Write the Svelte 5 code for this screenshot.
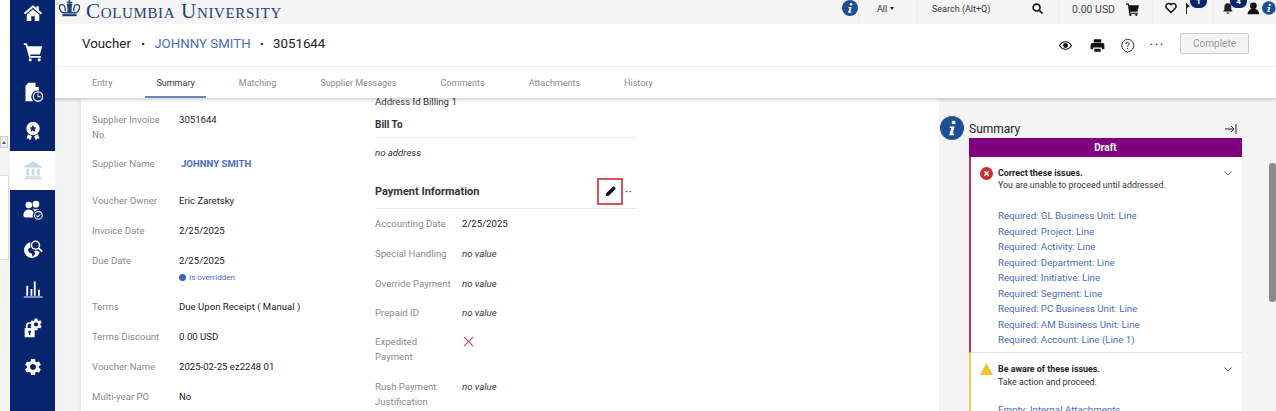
<script>
	const navIcons = ['home', 'cart', 'doc', 'award', 'bank', 'users', 'globe', 'chart', 'lock', 'gear'];
	const tabs = ['Entry', 'Summary', 'Matching', 'Supplier Messages', 'Comments', 'Attachments', 'History'];
	const issues = [
		'Required: GL Business Unit: Line',
		'Required: Project: Line',
		'Required: Activity: Line',
		'Required: Department: Line',
		'Required: Initiative: Line',
		'Required: Segment: Line',
		'Required: PC Business Unit: Line',
		'Required: AM Business Unit: Line',
		'Required: Account: Line (Line 1)'
	];
	const gearPath =
		'M19.14 12.94c.04-.3.06-.61.06-.94 0-.32-.02-.64-.07-.94l2.03-1.58a.49.49 0 0 0 .12-.61l-1.92-3.32a.488.488 0 0 0-.59-.22l-2.39.96c-.5-.38-1.03-.7-1.62-.94l-.36-2.54a.484.484 0 0 0-.48-.41h-3.84c-.24 0-.43.17-.47.41l-.36 2.54c-.59.24-1.13.57-1.62.94l-2.39-.96c-.22-.08-.47 0-.59.22L2.74 8.87c-.12.21-.08.47.12.61l2.03 1.58c-.05.3-.09.63-.09.94s.02.64.07.94l-2.03 1.58a.49.49 0 0 0-.12.61l1.92 3.32c.12.22.37.29.59.22l2.39-.96c.5.38 1.03.7 1.62.94l.36 2.54c.05.24.24.41.48.41h3.84c.24 0 .44-.17.47-.41l.36-2.54c.59-.24 1.13-.56 1.62-.94l2.39.96c.22.08.47 0 .59-.22l1.92-3.32c.12-.22.07-.47-.12-.61l-2.01-1.58zM12 15.6c-1.98 0-3.6-1.62-3.6-3.6s1.62-3.6 3.6-3.6 3.6 1.62 3.6 3.6-1.62 3.6-3.6 3.6z';
</script>

{#snippet infoDot(size)}
	<svg width={size} height={size} viewBox="0 0 24 24">
		<circle cx="12" cy="12" r="12" fill="#1f4f93" />
		<circle cx="13.6" cy="6.4" r="1.9" fill="#fff" />
		<path d="M10 10.4h4.6l-2 7.2h1.6l-.4 1.6H9.2l2-7.2H9.6z" fill="#fff" />
	</svg>
{/snippet}

{#snippet navIcon(name)}
	<svg width="20" height="20" viewBox="0 0 24 24" fill="currentColor">
		{#if name === 'home'}
			<path d="M12 2.5 1 12l1.6 1.8L12 5.7l9.4 8.1L23 12l-4-3.4V4h-3v2z" />
			<path d="M12 7.6 4.5 14v7.5h5.4v-5.6h4.2v5.6h5.4V14z" />
		{:else if name === 'cart'}
			<path d="M1 1.5h3.6l1.2 3.6h17.2l-2.6 10H8.6l.5 1.8h12.4v2H7.4L3.2 3.5H1z" />
			<circle cx="8.6" cy="21.4" r="1.9" />
			<circle cx="19.4" cy="21.4" r="1.9" />
		{:else if name === 'doc'}
			<path d="M6.5 1H15v5h4v4.5a7.5 7.5 0 0 0-6.9 12.5H3V4.5z" />
			<circle cx="18" cy="17.5" r="5.6" fill="none" stroke="currentColor" stroke-width="1.6" />
			<path d="M17.4 14h1.2v3.2h2.6v1.2h-3.8z" />
		{:else if name === 'award'}
			<path d="M12 1a8 8 0 1 0 0 16 8 8 0 0 0 0-16zm0 3.6 1.3 2.8 3 .4-2.2 2.1.6 3-2.7-1.5-2.7 1.5.6-3-2.2-2.1 3-.4z" fill-rule="evenodd" />
			<path d="m6 16 4.8 2.3-2.400 5.200L7 21l-2.800.2zM18 16l-4.800 2.300 2.400 5.200L17 21l2.800.2z" />
		{:else if name === 'bank'}
			<path d="M12 1.5 1.5 7.5V9h21V7.500z" />
			<path d="M4 10.500h3v8H4zM10.500 10.500h3v8h-3zM17 10.500h3v8h-3zM2.500 19.500h19v1.500h-19zM1.500 21.500h21V23h-21z" />
		{:else if name === 'users'}
			<circle cx="7" cy="6" r="4" />
			<circle cx="15.500" cy="5" r="4" />
			<path d="M0.500 19c0-5 2.500-7.500 6.500-7.500 2.800 0 4.700 1.200 5.700 3.500a7 7 0 0 0-.7 6H3a2.500 2.500 0 0 1-2.500-2z" />
			<path d="M11.500 9.800c1 .8 2.500 1.200 4 1.200 1.800 0 3.400.3 4.500 1.200a7 7 0 0 0-6.500 1.800c-.4-1.800-1-3-2-4.200z" />
			<circle cx="18.500" cy="18.500" r="4.600" fill="none" stroke="currentColor" stroke-width="1.300" />
			<path d="m16.200 18.600 1.700 1.700 2.900-3.200" fill="none" stroke="currentColor" stroke-width="1.300" />
		{:else if name === 'globe'}
			<path d="M9 4a9.500 9.500 0 1 0 11 11.500 8 8 0 0 1-2.600-1.500c-.6.300-1.600.1-2.100-.4l-1.800 1.500 1 3-3 3.400-.8-3.700-3.700-1.800-1-3.700 2.800-2.300L9 8.500A7 7 0 0 1 9 4z" />
			<circle cx="15" cy="7.500" r="4.800" fill="none" stroke="currentColor" stroke-width="1.800" />
			<path d="m18.500 11 4.500 4" stroke="currentColor" stroke-width="2.200" />
		{:else if name === 'chart'}
			<path d="M4 8h2.200v12H4zM9 12h2.200v8H9zM13 3h2.200v17H13zM18 13h2.200v7H18zM1 21h22.500v1.300H1z" />
		{:else if name === 'lock'}
			<g transform="translate(7 -1) scale(.72)"><path d={gearPath} /></g>
			<path d="M3.500 12V9.500a4.500 4.500 0 0 1 9 0V12h1.500v11H2V12zm2 0h5V9.500a2.500 2.500 0 0 0-5 0zM8 15a1.600 1.600 0 0 0-.8 3v2.500h1.600V18A1.600 1.600 0 0 0 8 15z" fill-rule="evenodd" />
		{:else}
			<path d={gearPath} />
		{/if}
	</svg>
{/snippet}

<div class="page">
	<div class="strip">
		<div class="strip-top"></div>
		<div class="strip-arrow"><span></span></div>
		<div class="strip-grey"></div>
		<div class="strip-panel"></div>
	</div>

	<nav class="sidebar">
		{#each navIcons as name}
			<div class="nav-item" class:active={name === 'bank'}>
				{@render navIcon(name)}
			</div>
		{/each}
	</nav>

	<div class="main">
		<header class="topbar">
			<div class="logo">
				<svg width="23" height="19" viewBox="0 0 24 20" fill="none" stroke="#1d4078" stroke-width="1.400">
					<path d="M12 1v12M9 3.500h6" />
					<path d="M2 6.500c3-1.500 5 0 5.500 3.500v3M22 6.500c-3-1.500-5 0-5.500 3.500v3" />
					<path d="M9.500 5c1 1.500 1 4 1 8h3c0-4 0-6.500 1-8" fill="#1d4078" />
					<path d="M2 6.500C.5 9 2 13 5 14.500h14C22 13 23.500 9 22 6.500" />
					<path d="M4.500 17h15" stroke-width="2.200" />
				</svg>
				<span>Columbia University</span>
			</div>
			<div class="top-info">{@render infoDot(16)}</div>
			<div class="seg seg-all">All <i class="caret"></i></div>
			<div class="seg seg-search">
				<span>Search (Alt+Q)</span>
				<svg width="11" height="11" viewBox="0 0 24 24" fill="none" stroke="#111" stroke-width="3.500"><circle cx="10" cy="10" r="7.500" /><path d="m16 16 7 7" /></svg>
			</div>
			<div class="seg seg-usd">
				<span>0.00 USD</span>
				<svg width="13" height="13" viewBox="0 0 24 24" fill="#111"><path d="M0 1h5l1 3h18l-3 12H7.500L8 18h14v2H6L3.500 3H0z" /><circle cx="8" cy="22" r="2" /><circle cx="19" cy="22" r="2" /></svg>
			</div>
			<div class="seg seg-fav">
				<svg width="12" height="12" viewBox="0 0 24 24" fill="none" stroke="#111" stroke-width="3"><path d="M12 21 3.500 12.500a5.500 5.500 0 0 1 0-8 5.500 5.500 0 0 1 8 0l.5.7.5-.7a5.500 5.500 0 0 1 8 0 5.500 5.500 0 0 1 0 8z" /></svg>
				<svg class="flag" width="4" height="11" viewBox="0 0 4 11" fill="#222"><path d="M0 0h1v11H0zM1 1l3 2-3 2z" /></svg>
				<b class="badge badge-fav">1</b>
			</div>
			<div class="seg seg-user">
				<svg width="12" height="13" viewBox="0 0 24 24" fill="#222"><path d="M12 1a7 7 0 0 1 7 7v6l3 4H2l3-4V8a7 7 0 0 1 7-7zM9 20h6a3 3 0 0 1-6 0z" /></svg>
				<b class="badge badge-bell">4</b>
				<svg class="user" width="13" height="13" viewBox="0 0 24 24" fill="#111"><circle cx="12" cy="7" r="6.500" /><path d="M1 23c0-6 4-9 7-10h8c3 1 7 4 7 10z" /></svg>
				{@render infoDot(14)}
			</div>
		</header>

		<div class="titlebar">
			<h1>Voucher <em class="first">•</em> <a href="#top">JOHNNY SMITH</a> <em>•</em> 3051644</h1>
			<div class="actions">
				<svg width="13" height="13" viewBox="0 0 24 24"><path d="M1 12C4 7 8 5 12 5s8 2 11 7c-3 5-7 7-11 7s-8-2-11-7z" fill="none" stroke="#111" stroke-width="2" /><circle cx="12" cy="12" r="4.500" fill="#111" /></svg>
				<svg width="15" height="15" viewBox="0 0 24 24" fill="#111"><path d="M6 2h12v5H6zM4 8h16a3 3 0 0 1 3 3v7h-4v-3H5v3H1v-7a3 3 0 0 1 3-3zM7 17h10v5H7z" /></svg>
				<svg class="help" width="15" height="15" viewBox="0 0 24 24" fill="none" stroke="#222" stroke-width="1.500"><path d="M12 2a10 10 0 0 1 2 19.800L12 23.500l-1-1.700A10 10 0 0 1 12 2z" /><path d="M9.500 9.500a2.500 2.500 0 1 1 3.500 2.300c-.7.400-1 .9-1 1.900M12 16v1.600" /></svg>
				<span class="dots">···</span>
				<button disabled>Complete</button>
			</div>
		</div>

		<div class="tabs">
			{#each tabs as tab}
				<span class="tab" class:current={tab === 'Summary'}>{tab}</span>
			{/each}
		</div>

		<div class="body">
			<section class="card">
				<div class="col col-left">
					<div class="row invoice"><label>Supplier Invoice No.</label><span>3051644</span></div>
					<div class="row wide-gap"><label>Supplier Name</label><a class="supplier" href="#top">JOHNNY SMITH</a></div>
					<div class="row"><label>Voucher Owner</label><span>Eric Zaretsky</span></div>
					<div class="row"><label>Invoice Date</label><span>2/25/2025</span></div>
					<div class="row due"><label>Due Date</label>
						<span>2/25/2025
							<small><i class="dot"></i>Is overridden</small>
						</span>
					</div>
					<div class="row"><label>Terms</label><span>Due Upon Receipt ( Manual )</span></div>
					<div class="row"><label>Terms Discount</label><span>0.00 USD</span></div>
					<div class="row"><label>Voucher Name</label><span>2025-02-25 ez2248 01</span></div>
					<div class="row"><label>Multi-year PO</label><span>No</span></div>
				</div>

				<div class="col col-right">
					<p class="address">Address Id Billing 1</p>
					<h3 class="bill">Bill To</h3>
					<p class="none">no address</p>
					<div class="pay-head">
						<h3>Payment Information</h3>
						<div class="edit">
							<svg width="11" height="11" viewBox="0 0 24 24" fill="#111"><path d="M16 2.500 21.500 8 8 21.500 1.500 22.500 2.500 16zM17.800 1l1.500-.5 4.200 4.200-.5 1.500-1.500 1.500L16.300 2.500z" /></svg>
						</div>
						<span class="more">··</span>
					</div>
					<div class="row"><label>Accounting Date</label><span>2/25/2025</span></div>
					<div class="row"><label>Special Handling</label><span class="nv">no value</span></div>
					<div class="row tight"><label>Override Payment</label><span class="nv">no value</span></div>
					<div class="row tight"><label>Prepaid ID</label><span class="nv">no value</span></div>
					<div class="row"><label>Expedited Payment</label>
						<svg class="cross" width="11" height="11" viewBox="0 0 12 12" fill="none" stroke="#c0485c" stroke-width="1.200"><path d="m1 1 10 10M11 1 1 11" /></svg>
					</div>
					<div class="row"><label>Rush Payment Justification</label><span class="nv">no value</span></div>
				</div>
			</section>

			<aside class="panel">
				<div class="panel-head">
					<div class="panel-info">{@render infoDot(24)}</div>
					<h2>Summary</h2>
					<svg width="12" height="10" viewBox="0 0 12 10" fill="none" stroke="#222" stroke-width="1"><path d="M0 5h9M6 2l3 3-3 3M11 0v10" /></svg>
				</div>
				<div class="draft">Draft</div>
				<div class="issues error">
					<div class="issue-head">
						<svg width="13" height="13" viewBox="0 0 24 24"><circle cx="12" cy="12" r="12" fill="#c9302c" /><path d="m8 8 8 8M16 8l-8 8" stroke="#fff" stroke-width="2.400" /></svg>
						<div class="issue-text"><b>Correct these issues.</b><br />You are unable to proceed until addressed.</div>
						<svg class="chev" width="8" height="5" viewBox="0 0 8 5" fill="none" stroke="#555"><path d="m.5.5 3.500 3.500L7.500.5" /></svg>
					</div>
					<ul>
						{#each issues as item}
							<li>{item}</li>
						{/each}
					</ul>
				</div>
				<div class="issues warn">
					<div class="issue-head">
						<svg width="13" height="12" viewBox="0 0 24 22" fill="#f2c230"><path d="M12 0 24 22H0z" /></svg>
						<div class="issue-text"><b>Be aware of these issues.</b><br />Take action and proceed.</div>
						<svg class="chev" width="8" height="5" viewBox="0 0 8 5" fill="none" stroke="#555"><path d="m.5.5 3.500 3.500L7.500.5" /></svg>
					</div>
					<ul><li>Empty: Internal Attachments</li></ul>
				</div>
			</aside>
			<div class="scrollbar"><span></span></div>
		</div>
	</div>
</div>

<style>
	:global(body) {
		margin: 0;
		overflow: hidden;
	}
	.page {
		display: flex;
		height: 411px;
		overflow: hidden;
		font-family: Roboto, 'Liberation Sans', sans-serif;
		font-size: 9.6px;
		color: #222;
		background: #f4f4f4;
	}

	/* sliver of the window behind */
	.strip {
		width: 10px;
		flex: none;
		display: flex;
		flex-direction: column;
		background: #f4f4f4;
	}
	.strip-top {
		height: 136px;
		background: #fff;
	}
	.strip-arrow {
		height: 12px;
		width: 8px;
		box-sizing: border-box;
		border: 1px solid #ccc;
		background: #eee;
		display: flex;
		align-items: center;
		justify-content: center;
	}
	.strip-arrow span {
		border: 2px solid transparent;
		border-bottom: 3px solid #555;
		border-top: 0;
	}
	.strip-grey {
		height: 27px;
	}
	.strip-panel {
		height: 83px;
		width: 8px;
		background: #fff;
		border-top: 1px solid #ddd;
		border-right: 1px solid #ddd;
		border-bottom: 1px solid #ddd;
	}

	.sidebar {
		width: 45px;
		flex: none;
		background: #07246f;
		display: flex;
		flex-direction: column;
		z-index: 3;
	}
	.nav-item {
		height: 39.4px;
		flex: none;
		display: flex;
		align-items: center;
		justify-content: center;
		color: #fff;
	}
	.nav-item:first-child {
		height: 26px;
		margin-bottom: 6.5px;
	}
	.nav-item.active {
		background: #fff;
		color: #c5d8e8;
	}

	.main {
		flex: 1;
		min-width: 0;
		display: flex;
		flex-direction: column;
	}

	.topbar {
		height: 24px;
		flex: none;
		display: flex;
		align-items: center;
		background: #f5f5f5;
		position: relative;
		z-index: 3;
	}
	.logo {
		display: flex;
		align-items: center;
		gap: 5px;
		margin-left: 3px;
		margin-right: auto;
		color: #1d4078;
		font-family: 'Liberation Serif', serif;
		font-size: 21px;
		font-variant: small-caps;
		letter-spacing: 0.65px;
	}
	.logo svg {
		margin-top: -8px;
	}
	.logo span {
		margin-top: -2px;
	}
	.top-info {
		display: flex;
		width: 16px;
		margin-top: -8px;
	}
	.seg {
		height: 24px;
		box-sizing: border-box;
		border-left: 1px solid #ececec;
		display: flex;
		align-items: center;
		position: relative;
		flex: none;
	}
	.seg-all {
		width: 59px;
		padding-left: 18px;
		padding-bottom: 7px;
		font-size: 9px;
		color: #333;
		gap: 3px;
	}
	.caret {
		border: 2.5px solid transparent;
		border-top: 3px solid #222;
		border-bottom: 0;
	}
	.seg-search {
		width: 141px;
		padding-left: 14px;
		padding-bottom: 7px;
		font-size: 9px;
		color: #333;
	}
	.seg-search svg {
		margin-left: 42px;
	}
	.seg-usd {
		width: 94px;
		padding-left: 13px;
		padding-bottom: 6px;
		font-size: 10.5px;
		color: #444;
	}
	.seg-usd svg {
		margin-left: 11px;
	}
	.seg-fav {
		width: 61px;
		padding-left: 12px;
		padding-bottom: 8px;
	}
	.flag {
		margin-left: 9px;
	}
	.badge {
		position: absolute;
		width: 17px;
		height: 13px;
		top: -5px;
		border-radius: 7px;
		background: #07246f;
		color: #fff;
		font-size: 8px;
		line-height: 13px;
		text-align: center;
	}
	.badge-fav {
		left: 37px;
	}
	.seg-user {
		width: 63px;
		padding-left: 8px;
		padding-bottom: 8px;
	}
	.badge-bell {
		left: 16px;
	}
	.user {
		margin-left: 13px;
		margin-right: 3px;
	}

	.titlebar {
		height: 43px;
		flex: none;
		box-sizing: border-box;
		background: #fff;
		display: flex;
		align-items: center;
		padding-left: 27px;
		border-bottom: 1px solid #f2f2f2;
		z-index: 2;
	}
	h1 {
		margin: 0 0 3px;
		font-size: 13.3px;
		font-weight: 400;
		color: #222;
		word-spacing: 6px;
	}
	h1 a {
		color: #4a6bbd;
		text-decoration: none;
		word-spacing: 0;
	}
	h1 em {
		font-style: normal;
		font-size: 11px;
	}
	h1 em.first {
		margin-left: 1px;
	}
	.actions {
		margin-left: auto;
		margin-right: 27px;
		display: flex;
		align-items: center;
	}
	.actions svg:nth-child(2) {
		margin-left: 18px;
	}
	.help {
		margin-left: 15px;
	}
	.dots {
		margin: 0 15px 0 15px;
		font-size: 14px;
		letter-spacing: 1.5px;
		color: #333;
	}
	button {
		width: 69px;
		height: 21px;
		box-sizing: border-box;
		border: 1px solid #c8cdd4;
		border-radius: 2px;
		background: #f4f4f4;
		color: #999;
		font-family: inherit;
		font-size: 10px;
		padding: 0;
		margin-bottom: 4px;
	}

	.tabs {
		height: 31px;
		flex: none;
		display: flex;
		gap: 22px;
		padding-left: 26px;
		font-size: 9px;
		background: #fff;
		box-shadow: 0 2px 3px rgba(0, 0, 0, 0.18);
		position: relative;
		z-index: 2;
	}
	.tab {
		padding: 1px 11px 0;
		line-height: 30px;
		color: #8b8b8b;
		box-sizing: border-box;
	}
	.tab.current {
		color: #333;
		border-bottom: 2px solid #6b86b5;
	}

	.body {
		flex: 1;
		min-height: 0;
		display: flex;
		overflow: hidden;
	}
	.card {
		width: 858px;
		margin-left: 26px;
		flex: none;
		background: #fff;
		box-shadow: -2px 0 4px rgba(0, 0, 0, 0.06);
		display: flex;
	}
	.col {
		flex: none;
	}
	.col-left {
		width: 283px;
		margin-left: 11px;
		padding-top: 14px;
	}
	.col-right {
		width: 262px;
		margin-top: -3px;
	}
	.row {
		display: grid;
		grid-template-columns: 87px 1fr;
		line-height: 15px;
		padding-bottom: 15px;
		color: #222;
	}
	.row label {
		color: #8b8b8b;
		padding-right: 6px;
	}
	.invoice,
	.tight {
		padding-bottom: 14px;
	}
	.wide-gap {
		padding-bottom: 22px;
	}
	.due {
		padding-bottom: 14px;
	}
	.supplier {
		color: #4a6bbd;
		font-weight: 700;
		text-decoration: none;
		margin-left: 2px;
	}
	small {
		display: flex;
		align-items: center;
		gap: 3px;
		margin-top: 2px;
		font-size: 8px;
		color: #4a6bbd;
	}
	.dot {
		width: 7px;
		height: 7px;
		border-radius: 50%;
		background: #3a66c0;
	}
	.nv,
	.none {
		font-style: italic;
		color: #333;
	}
	.cross {
		margin: 2px 0 0 1px;
	}
	.address {
		margin: 0;
		line-height: 14px;
		color: #333;
	}
	.bill {
		margin: 0;
		padding: 8px 0 5px;
		line-height: 15px;
		font-size: 10px;
		font-weight: 700;
		color: #333;
		border-bottom: 1px solid #eee;
	}
	.none {
		margin: 0;
		padding-top: 7px;
		line-height: 15px;
	}
	.pay-head {
		display: flex;
		align-items: center;
		height: 33px;
		margin-top: 15px;
		margin-bottom: 7px;
		border-bottom: 1px solid #e8e8e8;
	}
	.pay-head h3 {
		margin: 0;
		font-size: 11px;
		font-weight: 700;
		color: #333;
	}
	.edit {
		width: 26px;
		height: 27px;
		box-sizing: border-box;
		margin-left: auto;
		border: 2px solid #d6515a;
		display: flex;
		align-items: center;
		justify-content: center;
	}
	.more {
		width: 14px;
		padding-left: 2px;
		box-sizing: border-box;
		font-size: 13px;
		color: #333;
	}

	.panel {
		width: 273px;
		margin-left: 30px;
		flex: none;
	}
	.panel-head {
		height: 40px;
		box-sizing: border-box;
		padding: 21px 5px 0 0;
		display: flex;
		justify-content: space-between;
		align-items: center;
		position: relative;
	}
	.panel-info {
		position: absolute;
		left: -29px;
		top: 18px;
	}
	h2 {
		margin: 0;
		font-size: 12px;
		font-weight: 400;
		color: #222;
	}
	.draft {
		height: 19px;
		background: #800080;
		color: #fff;
		font-size: 10px;
		font-weight: 700;
		line-height: 19px;
		text-align: center;
	}
	.issues {
		background: #fff;
		border-left: 2px solid #c9374f;
		box-sizing: border-box;
		color: #333;
	}
	.error {
		height: 196px;
		padding-top: 10px;
		border-bottom: 1px solid #e4e4e4;
	}
	.warn {
		border-left-color: #f2c94c;
		padding-top: 9.5px;
		height: 100px;
	}
	.issue-head {
		display: flex;
		align-items: flex-start;
		padding-left: 9px;
		font-size: 8.9px;
		line-height: 12px;
	}
	.warn .issue-head {
		line-height: 13px;
	}
	.issue-text {
		margin-left: 5px;
		flex: 1;
	}
	.issue-text b {
		color: #222;
	}
	.chev {
		margin: 4px 10px 0 0;
	}
	ul {
		list-style: none;
		margin: 17px 0 0 27px;
		padding: 0;
		font-size: 9.7px;
	}
	.warn ul {
		margin-top: 13px;
	}
	li {
		height: 15.5px;
		line-height: 15.5px;
		color: #4a6bbd;
	}
	.scrollbar {
		flex: 1;
		min-width: 0;
		display: flex;
		justify-content: flex-end;
		padding-top: 65px;
	}
	.scrollbar span {
		width: 7px;
		height: 139px;
		border-radius: 3px;
		background: #8a8a8a;
	}
</style>
